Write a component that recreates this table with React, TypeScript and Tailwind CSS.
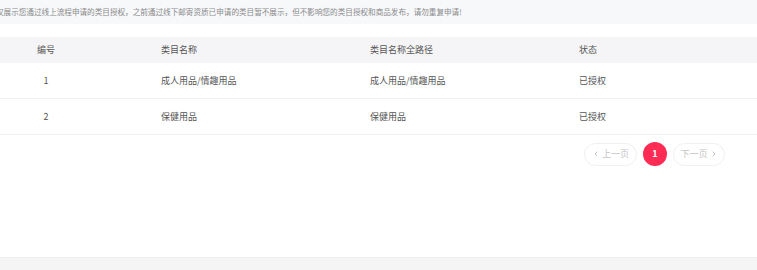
import { ChevronLeft, ChevronRight } from 'lucide-react';

const rows = [
  { id: 1, name: '成人用品/情趣用品', path: '成人用品/情趣用品', status: '已授权' },
  { id: 2, name: '保健用品', path: '保健用品', status: '已授权' },
];

const font = { fontFamily: '"Noto Sans CJK SC", "Noto Sans", sans-serif' };

export default function App() {
  return (
    <div className="w-[757px] h-[270px] bg-white overflow-hidden flex flex-col" style={font}>
      {/* notice */}
      <div className="h-[24px] shrink-0 bg-[#f7f8fa] flex items-center overflow-hidden">
        <p className="ml-[-4px] whitespace-nowrap text-[7.6px] text-[#8a8a8a]">
          仅展示您通过线上流程申请的类目授权，之前通过线下邮寄资质已申请的类目暂不展示，但不影响您的类目授权和商品发布，请勿重复申请!
        </p>
      </div>

      {/* table */}
      <div className="mt-[13px] text-[9px] text-[#555]">
        <div className="grid grid-cols-[145px_209px_209px_1fr] h-[26px] items-center bg-[#f5f5f7]">
          <div className="pr-[53px] text-center">编号</div>
          <div className="pl-4">类目名称</div>
          <div className="pl-4">类目名称全路径</div>
          <div className="pl-4">状态</div>
        </div>
        {rows.map(r => (
          <div key={r.id} className="grid grid-cols-[145px_209px_209px_1fr] h-[36px] items-center border-b border-[#f2f2f2]">
            <div className="pr-[53px] text-center">{r.id}</div>
            <div className="pl-4">{r.name}</div>
            <div className="pl-4">{r.path}</div>
            <div className="pl-4">{r.status}</div>
          </div>
        ))}
      </div>

      {/* pagination */}
      <div className="mt-[7px] flex items-center gap-[6px] pl-[584px] text-[9px]">
        <button className="w-[53px] h-[23px] rounded-full border border-[#f0f0f0] flex items-center justify-center gap-[2px] text-[#c4c4c4]">
          <ChevronLeft className="w-2 h-2" strokeWidth={3} /> 上一页
        </button>
        <button className="w-[24px] h-[24px] rounded-full bg-[#fe2c55] text-white font-bold flex items-center justify-center">
          1
        </button>
        <button className="w-[52px] h-[23px] rounded-full border border-[#f0f0f0] flex items-center justify-center gap-[2px] text-[#c4c4c4]">
          下一页 <ChevronRight className="w-2 h-2" strokeWidth={3} />
        </button>
      </div>

      <div className="flex-1" />
      <div className="h-[13px] shrink-0 bg-[#f5f5f5] border-t border-[#eeeeee]" />
    </div>
  );
}
